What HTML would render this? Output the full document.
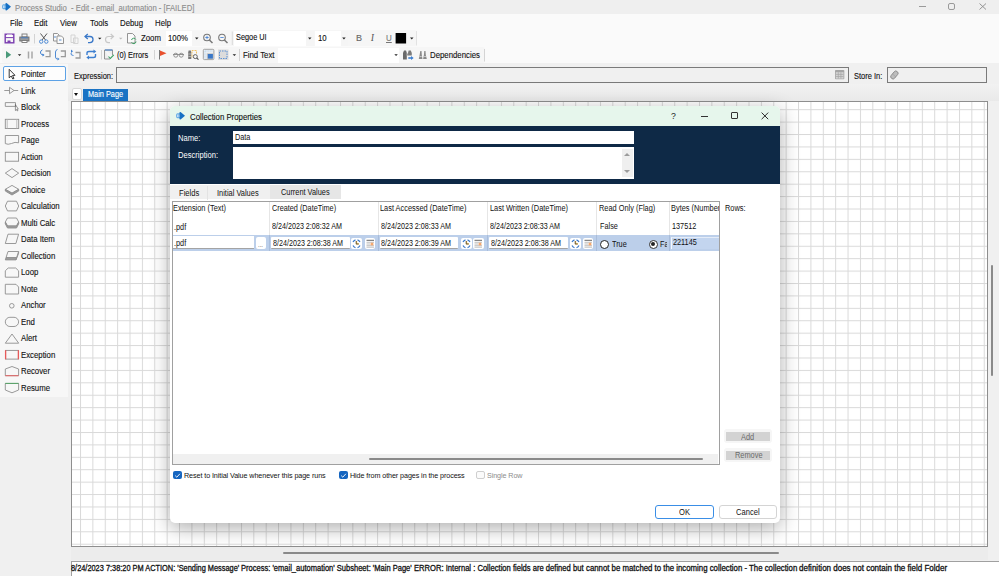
<!DOCTYPE html>
<html><head><meta charset="utf-8">
<style>
*{box-sizing:border-box;margin:0;padding:0}
html,body{width:999px;height:576px;overflow:hidden;background:#f0f0f0;font-family:"Liberation Sans",sans-serif;font-size:7.6px;color:#111}
.a{position:absolute}
.t{position:absolute;white-space:nowrap;line-height:10px;transform-origin:0 50%;-webkit-text-stroke:0.12px currentColor}
#dlgc .t{-webkit-text-stroke:0}
svg{position:absolute;overflow:visible}
.mn{top:17.6px;font-size:7.8px;color:#111}
.tb{font-size:7.8px;color:#111}
.tl{left:21px;font-size:7.8px;color:#111}
.w{color:#fff}
.gh{font-size:7.4px;color:#111}
.gt{font-size:7.6px;color:#111}
.gd{font-size:7.3px;color:#111}
.gc{font-size:7.2px;color:#111;letter-spacing:-0.1px}
.dd{position:absolute;width:0;height:0;border-left:2px solid transparent;border-right:2px solid transparent;border-top:2px solid #111}
</style></head><body>
<!-- title bar -->
<div class="a" style="left:0;top:0;width:999px;height:14px;background:#efefef"></div>
<svg style="left:2.1px;top:2.9px" width="9" height="7.5" viewBox="0 0 9 7.5"><path d="M1.2 1.2 Q0 1.5 0 3.75 Q0 6 1.2 6.3 L4.5 6.3 L4.5 1.2 Z" fill="#6aaee6"/><path d="M3.5 0.2 L4.6 0 L9 3.75 L4.6 7.5 L3.5 7.3 Z" fill="#1670c4"/><path d="M1.5 2.5 V5 M2.9 2.5 V5" stroke="#e4f1fb" stroke-width="0.7"/></svg>
<div class="t" style="left:15px;top:2.7px;color:#8c8c8c;font-size:8.63px;transform:scaleX(0.8929)">Process Studio&nbsp; - Edit - email_automation - [FAILED]</div>
<div class="a" style="left:919px;top:6px;width:7px;height:1px;background:#9a9a9a"></div>
<div class="a" style="left:948px;top:3px;width:7px;height:7px;border:1px solid #9a9a9a;border-radius:2px"></div>
<svg style="left:979px;top:2.5px" width="8" height="7"><path d="M0.5 0.5 L7 6.5 M7 0.5 L0.5 6.5" stroke="#8a8a8a" stroke-width="0.9"/></svg>

<!-- menu / toolbar background -->
<div class="a" style="left:0;top:14px;width:999px;height:48.5px;background:#fafafa"></div>
<div class="t mn" style="left:9.7px;font-size:8.74px;transform:scaleX(0.8929)">File</div>
<div class="t mn" style="left:34.3px;font-size:8.74px;transform:scaleX(0.8929)">Edit</div>
<div class="t mn" style="left:60px;font-size:8.74px;transform:scaleX(0.8929)">View</div>
<div class="t mn" style="left:89.5px;font-size:8.74px;transform:scaleX(0.8929)">Tools</div>
<div class="t mn" style="left:119.5px;font-size:8.74px;transform:scaleX(0.8929)">Debug</div>
<div class="t mn" style="left:155.3px;font-size:8.74px;transform:scaleX(0.8929)">Help</div>

<!-- toolbar 1 -->
<div class="a" style="left:2px;top:30px;width:415px;height:16px;background:#f6f6f6;border-radius:2px"></div>
<div class="a" style="left:166px;top:31px;width:34px;height:14.5px;background:#fff"></div>
<div class="a" style="left:192px;top:31px;width:8px;height:14.5px;background:#f5f5f5"></div>
<div class="a" style="left:234px;top:31px;width:80px;height:14.5px;background:#fff"></div>
<div class="a" style="left:306px;top:31px;width:8px;height:14.5px;background:#f5f5f5"></div>
<div class="a" style="left:315px;top:31px;width:33px;height:14.5px;background:#fff"></div>
<div class="a" style="left:341px;top:31px;width:7px;height:14.5px;background:#f5f5f5"></div>
<div class="t tb" style="left:141px;top:33px;font-size:8.74px;transform:scaleX(0.8929)">Zoom</div>
<div class="t tb" style="left:168px;top:33px;font-size:8.74px;transform:scaleX(0.8929)">100%</div>
<div class="t tb" style="left:236px;top:33px;font-size:8.22px;transform:scaleX(0.8929)">Segoe UI</div>
<div class="t tb" style="left:317.8px;top:33px;font-size:8.74px;transform:scaleX(0.8929)">10</div>
<!-- toolbar 2 -->
<div class="a" style="left:2px;top:47px;width:483px;height:16px;background:#f6f6f6;border-radius:2px"></div>
<div class="a" style="left:278px;top:47.5px;width:121px;height:15px;background:#fff"></div>
<div class="t tb" style="left:117px;top:49.5px;font-size:8.3px;transform:scaleX(0.8929)">(0) Errors</div>
<div class="t tb" style="left:243px;top:50px;font-size:8.74px;transform:scaleX(0.8929)">Find Text</div>
<div class="t tb" style="left:430px;top:50px;font-size:8.74px;transform:scaleX(0.8929)">Dependencies</div>

<svg style="left:0;top:0" width="500" height="66" fill="none" stroke-width="0.9">
<!-- save -->
<rect x="5.2" y="34.2" width="8.6" height="8.6" stroke="#7a3db0" stroke-width="1.4"/>
<rect x="7" y="34.5" width="5" height="3" fill="#fff" stroke="none"/>
<path d="M5.2 37.6 H13.8" stroke="#7a3db0" stroke-width="1"/>
<rect x="7.5" y="40.5" width="3" height="2.3" fill="#7a3db0" stroke="none"/>
<!-- print -->
<rect x="22" y="34" width="5" height="3" stroke="#777"/>
<rect x="19.8" y="37" width="9.2" height="4" fill="#9a9a9a" stroke="#6f6f6f"/>
<path d="M21 37.8 H28" stroke="#3a7ad0" stroke-width="0.8"/>
<rect x="22" y="40.5" width="5" height="2" fill="#fff" stroke="#777"/>
<path d="M34.5 34 V43.5" stroke="#cfcfcf"/>
<!-- cut -->
<path d="M40.5 33.5 L45.5 40 M47 33.5 L42 40" stroke="#444"/>
<circle cx="41.2" cy="41.6" r="1.7" stroke="#3d7fd0"/><circle cx="46.3" cy="41.6" r="1.7" stroke="#3d7fd0"/>
<!-- copy -->
<path d="M53.5 33.5 H57.5 L59 35 V41 H53.5 Z" stroke="#8a8a8a" fill="#fafafa"/>
<path d="M57 36 H61.5 L63.5 38 V43.5 H57 Z" stroke="#8a8a8a" fill="#fafafa"/>
<path d="M55 36 V38 M59 40 L61.5 40" stroke="#4a86d0"/>
<!-- paste disabled -->
<path d="M71 35 H75 V42.5 H71 Z M73.5 38 H78 V43.5 H73.5 Z" stroke="#d0d0d0"/>
<!-- undo -->
<path d="M85.5 36.5 H90 Q93 36.5 93 39.5 Q93 42.6 90 42.6 H88" stroke="#3a78c8" stroke-width="1.3"/>
<path d="M87.8 34 L85 36.5 L87.8 39" stroke="#3a78c8" stroke-width="1.3"/>
<path d="M98 37.8 H101.5 L99.75 39.6 Z" fill="#222" stroke="none"/>
<!-- redo -->
<path d="M113 36.5 H108.5 Q105.5 36.5 105.5 39.5 Q105.5 42.6 108.5 42.6 H110" stroke="#c8c8c8" stroke-width="1.2"/>
<path d="M110.7 34 L113.5 36.5 L110.7 39" stroke="#c8c8c8" stroke-width="1.2"/>
<path d="M119 37.8 H122.5 L120.75 39.6 Z" fill="#bbb" stroke="none"/>
<!-- page refresh -->
<path d="M127.5 33.5 H132.5 L135 36 V43 H127.5 Z" stroke="#888" fill="#fafafa"/>
<path d="M131.5 40 A2.3 2.3 0 0 1 135.8 39.5 M136 41.5 A2.3 2.3 0 0 1 131.6 42.3" stroke="#3aa060" stroke-width="1"/>
<path d="M195 37.6 H198.5 L196.75 39.4 Z" fill="#222" stroke="none"/>
<!-- zoom in/out -->
<circle cx="207" cy="37.5" r="3.3" stroke="#777" stroke-width="1.1"/><path d="M209.4 40 L212.5 43" stroke="#777" stroke-width="1.5"/><path d="M205.3 37.5 H208.7 M207 35.8 V39.2" stroke="#3a7ad0" stroke-width="0.8"/>
<circle cx="222" cy="37.5" r="3.3" stroke="#777" stroke-width="1.1"/><path d="M224.4 40 L227.5 43" stroke="#777" stroke-width="1.5"/><path d="M220.3 37.5 H223.7" stroke="#3a7ad0" stroke-width="0.8"/>
<path d="M232.3 31.5 V45" stroke="#d6d6d6"/>
<path d="M308 37.6 H311.5 L309.75 39.4 Z" fill="#222" stroke="none"/>
<path d="M342.2 37.6 H345.7 L343.95 39.4 Z" fill="#222" stroke="none"/>
<rect x="395.6" y="33" width="10.5" height="10.5" fill="#000" stroke="none"/>
<path d="M410 37.6 H413.5 L411.75 39.4 Z" fill="#222" stroke="none"/>
<path d="M416.5 31 V45.5" stroke="#e0e0e0"/>
<!-- row2 -->
<path d="M6 51 L11.2 54.8 L6 58.6 Z" fill="#4a9a7a" stroke="none"/>
<path d="M17.8 54.3 H21.3 L19.55 56.1 Z" fill="#222" stroke="none"/>
<path d="M28.5 51.5 V58.5 M32 51.5 V58.5" stroke="#a8a8a8" stroke-width="1.5"/>
<!-- step icons -->
<path d="M42.5 49.8 Q40 51 40.5 53 Q41 55 43.5 55" stroke="#3d7fd0" stroke-width="1"/><path d="M42.5 53.6 L44.5 55 L42.5 56.5 Z" fill="#3d7fd0" stroke="none"/>
<path d="M45.5 51 H50 V56.6 H45.5" stroke="#9a9a9a" stroke-width="1.3"/>
<path d="M57.5 49.5 Q55.5 50 55.5 52 V57 Q55.5 59 57.5 59" stroke="#3d7fd0" stroke-width="0.9"/><path d="M57.5 57.6 L59.5 59 L57.5 60.4 Z" fill="#3d7fd0" stroke="none"/>
<path d="M60.8 51 H65.3 V56.6 H60.8" stroke="#9a9a9a" stroke-width="1.3"/>
<path d="M71 53 Q70.5 55.5 73.5 55.5" stroke="#3d7fd0" stroke-width="0.9"/><path d="M71 49.5 L73 51.2 L71 53 Z" fill="#3d7fd0" stroke="none"/>
<path d="M75.5 52.5 H80 V58 H75.5" stroke="#9a9a9a" stroke-width="1.3"/>
<path d="M87 55 V53 Q87 51.5 89 51.5 H94" stroke="#3d7fd0" stroke-width="1.4"/><path d="M93.5 49.5 L96.3 51.5 L93.5 53.5 Z" fill="#3d7fd0" stroke="none"/>
<path d="M95.5 54 V56 Q95.5 57.5 93.5 57.5 H88.5" stroke="#3d7fd0" stroke-width="1.4"/><path d="M89 55.5 L86.3 57.5 L89 59.5 Z" fill="#3d7fd0" stroke="none"/>
<path d="M101.5 50 V59.5" stroke="#d0d0d0"/>
<!-- errors icon -->
<path d="M104.5 50 H112.5 V55 M104.5 50 V59 H110" stroke="#8a8a8a" fill="#eeeeee"/>
<path d="M105 50 H112.5" stroke="#3d7fd0" stroke-width="1"/>
<path d="M108.5 56.5 L110.3 58.5 L113.8 54.8" stroke="#3aa060" stroke-width="1.1"/>
<path d="M154.5 50 V59.5" stroke="#d0d0d0"/>
<!-- flag -->
<path d="M159.5 50 V59.5" stroke="#777" stroke-width="1"/><path d="M160 50.5 L166.5 53.3 L160 56 Z" fill="#e8502e" stroke="none"/>
<!-- glasses -->
<circle cx="175.8" cy="55.2" r="2" stroke="#888"/><circle cx="181.2" cy="55.2" r="2" stroke="#888"/><path d="M173 54.5 H184" stroke="#888"/>
<!-- binoculars -->
<path d="M188.6 50.5 H190.8 L191.3 52.5 V59 H188.2 V52.5 Z" fill="#777" stroke="none"/><path d="M188.4 54 H191 M188.4 56.5 H191" stroke="#ddd" stroke-width="0.6"/>
<path d="M192 50.5 H196.5 V54 M192 50.5 V58" stroke="#f0c060" stroke-width="1" stroke-dasharray="1 0.5"/>
<circle cx="195.3" cy="56.6" r="2" stroke="#555" stroke-width="0.9"/><path d="M196.7 58 L198.5 59.7" stroke="#555" stroke-width="1.1"/>
<!-- selected icon -->
<rect x="203.3" y="49.3" width="10.6" height="10.3" rx="1" fill="#e8eef4" stroke="#9a9a9a" stroke-width="0.9"/>
<path d="M205 51 H212.5 M205 51 V58.5" stroke="#b8d4ee" stroke-width="0.8" stroke-dasharray="1 0.6"/>
<rect x="206.8" y="53.2" width="6.5" height="5.8" fill="#c8c8c8" stroke="none"/>
<rect x="207.8" y="54" width="5.1" height="4.6" fill="#3a78c8" stroke="none"/>
<!-- dotted square -->
<rect x="218" y="49.5" width="10.5" height="10.5" fill="#dcdcdc" stroke="none"/>
<rect x="219.5" y="51" width="7.5" height="7.5" stroke="#3d7fd0" stroke-dasharray="1.5 1" stroke-width="0.8"/>
<path d="M232.6 54.3 H236.1 L234.35 56.1 Z" fill="#222" stroke="none"/>
<path d="M239.5 49 V61" stroke="#d0d0d0"/>
<path d="M394.3 54.3 H397.8 L396.05 56.1 Z" fill="#222" stroke="none"/>
<!-- binoc 2 -->
<path d="M404 50.6 H406 L406.8 53 V59.6 H403 V53 Z" fill="#6a6a6a" stroke="none"/><path d="M408.6 50.6 H410.8 L411.8 53 V55.5 H408 V53 Z" fill="#7a7a7a" stroke="none"/><path d="M406.5 53.5 H408.3 V55.5 H406.5 Z" fill="#999" stroke="none"/>
<path d="M408.3 58 H411.6" stroke="#3d7fd0" stroke-width="1.6"/><path d="M411 55.9 L413.7 58 L411 60.1 Z" fill="#3d7fd0" stroke="none"/>
<!-- deps icon -->
<path d="M420.3 51 H421.5 L421.8 55 L422.5 58.9 H418.8 L419.6 55 Z M424.3 51 H425.5 L425.8 55 L426.8 58.9 H423.1 L423.9 55 Z" fill="#8a8a8a" stroke="none"/><path d="M419.5 56.5 H421.8 M423.8 56.5 H426" stroke="#eee" stroke-width="0.6"/>
<path d="M484.5 49 V61.5" stroke="#d0d0d0"/>
<!-- B I U -->
</svg>
<div class="t" style="left:355.5px;top:33px;font-size:9.52px;color:#666;transform:scaleX(0.95)">B</div>
<div class="t" style="left:370.5px;top:33px;font-size:9.52px;font-family:'Liberation Serif',serif;font-style:italic;color:#555;transform:scaleX(0.8929)">I</div>
<div class="t" style="left:386px;top:33px;font-size:8.96px;text-decoration:underline;color:#777;transform:scaleX(0.8929)">U</div>


<!-- expression row -->
<div class="a" style="left:0;top:64px;width:68px;height:333px;background:#f7f7f7"></div>
<div class="a" style="left:3.1px;top:66.3px;width:62.5px;height:14.8px;border:1.3px solid #5da2e6;border-radius:2px;background:#fdfdfd"></div>
<div class="t tl" style="top:69.4px;font-size:8.74px;transform:scaleX(0.8929)">Pointer</div>
<div class="t tb" style="left:73.5px;top:71.3px;font-size:8.39px;transform:scaleX(0.8929)">Expression:</div>
<div class="a" style="left:116px;top:67px;width:732.5px;height:16px;border:1px solid #7a7a7a;background:#f0f0f0"></div>
<div class="t tb" style="left:853.7px;top:71.3px;font-size:8.39px;transform:scaleX(0.8929)">Store In:</div>
<div class="a" style="left:887px;top:67px;width:100px;height:16px;border:1px solid #7a7a7a;background:#f0f0f0"></div>

<svg style="left:834.8px;top:70.4px" width="10" height="10" fill="none"><rect x="0" y="0" width="9.3" height="9.3" rx="0.8" fill="#a6a6a6"/><rect x="0.8" y="2.2" width="7.7" height="6.4" fill="#d4d4d4"/><path d="M0.8 4.4 H8.5 M0.8 6.5 H8.5 M3.3 2.2 V8.6 M5.9 2.2 V8.6" stroke="#a6a6a6" stroke-width="0.7"/></svg>
<svg style="left:890.4px;top:70px" width="10" height="10" fill="none"><rect x="2.2" y="0.6" width="4.4" height="8.8" rx="2" transform="rotate(40 4.4 5)" fill="#bdbdbd" stroke="#8a8a8a" stroke-width="0.9"/><path d="M2.5 4 L6 7" stroke="#9a9a9a" stroke-width="0.6"/></svg>
<!-- toolbox panel -->
<div class="t tl" style="top:85.9px;font-size:8.74px;transform:scaleX(0.8929)">Link</div>
<div class="t tl" style="top:102.4px;font-size:8.74px;transform:scaleX(0.8929)">Block</div>
<div class="t tl" style="top:118.9px;font-size:8.74px;transform:scaleX(0.8929)">Process</div>
<div class="t tl" style="top:135.4px;font-size:8.74px;transform:scaleX(0.8929)">Page</div>
<div class="t tl" style="top:151.9px;font-size:8.74px;transform:scaleX(0.8929)">Action</div>
<div class="t tl" style="top:168.4px;font-size:8.74px;transform:scaleX(0.8929)">Decision</div>
<div class="t tl" style="top:184.9px;font-size:8.74px;transform:scaleX(0.8929)">Choice</div>
<div class="t tl" style="top:201.4px;font-size:8.74px;transform:scaleX(0.8929)">Calculation</div>
<div class="t tl" style="top:217.9px;font-size:8.74px;transform:scaleX(0.8929)">Multi Calc</div>
<div class="t tl" style="top:234.4px;font-size:8.74px;transform:scaleX(0.8929)">Data Item</div>
<div class="t tl" style="top:250.9px;font-size:8.74px;transform:scaleX(0.8929)">Collection</div>
<div class="t tl" style="top:267.4px;font-size:8.74px;transform:scaleX(0.8929)">Loop</div>
<div class="t tl" style="top:283.9px;font-size:8.74px;transform:scaleX(0.8929)">Note</div>
<div class="t tl" style="top:300.4px;font-size:8.74px;transform:scaleX(0.8929)">Anchor</div>
<div class="t tl" style="top:316.9px;font-size:8.74px;transform:scaleX(0.8929)">End</div>
<div class="t tl" style="top:333.4px;font-size:8.74px;transform:scaleX(0.8929)">Alert</div>
<div class="t tl" style="top:349.9px;font-size:8.74px;transform:scaleX(0.8929)">Exception</div>
<div class="t tl" style="top:366.4px;font-size:8.74px;transform:scaleX(0.8929)">Recover</div>
<div class="t tl" style="top:382.9px;font-size:8.74px;transform:scaleX(0.8929)">Resume</div>

<svg style="left:0;top:0" width="70" height="400" fill="none" stroke="#8e8e8e" stroke-width="0.9">
<!-- pointer -->
<path d="M9.2 69.3 L9.2 77.8 L11.2 76 L12.8 79 L14 78.4 L12.5 75.5 L15 75.3 Z" stroke="#1a1a1a" stroke-width="0.85" fill="#fff"/>
<!-- link -->
<path d="M4.3 90.5 H9.5 M14 90.5 H18.2 M9.5 87.3 V93.7 L14 90.5 Z"/>
<!-- block -->
<path d="M5.3 102.6 H15.5 V106.4 H5.3 Z" />
<path d="M15.4 104.6 L15.4 110.5 L16.4 109.6 L17.3 111 L17.9 110.6 L17 109.3 L18.3 109.1 Z" stroke="#555" stroke-width="0.6"/>
<!-- process -->
<rect x="5.3" y="119.3" width="13.4" height="9.2"/><path d="M7.2 119.3 V128.5 M16.8 119.3 V128.5" stroke="#b5b5b5"/>
<!-- page -->
<path d="M5.3 135.5 H18.6 V142.8 Q15 141.6 11.5 143.5 Q8 145 5.3 143.6 Z"/>
<!-- action -->
<rect x="5.3" y="152.3" width="13.3" height="8.9"/>
<!-- decision -->
<path d="M5.3 173.1 L12 168.6 L18.7 173.1 L12 177.6 Z"/>
<!-- choice -->
<path d="M5.3 189.3 L12 185.4 L18.7 189.3 L12 193.2 Z"/>
<path d="M5.3 189.3 V191 L12 195 L18.7 191 V189.3 L12 193.2 Z" fill="#9a9a9a" stroke="#8e8e8e"/>
<!-- calculation -->
<path d="M7.5 201.2 H16.5 L18.7 206 L16.5 210.9 H7.5 L5.3 206 Z"/>
<!-- multi calc -->
<path d="M7.5 218 H16.5 L18.7 222 L16.5 226 H7.5 L5.3 222 Z"/>
<path d="M5.3 222 V223.8 L7.5 228 H16.5 L18.7 223.8 V222 L16.5 226 H7.5 Z" fill="#a0a0a0"/>
<!-- data item -->
<path d="M8 234.2 H18.6 L15.9 243.5 H5.3 Z"/>
<!-- collection -->
<path d="M8 251.5 H18.6 L16.6 257.7 H6 Z"/>
<path d="M6 257.7 L5.3 259.9 H16 L16.6 257.7 Z M18.6 251.5 V253.3 L16 259.9" fill="#a0a0a0"/>
<!-- loop -->
<path d="M5.3 277.2 V270.8 L8.2 268 H15.7 L18.6 270.8 V277.2 Z"/>
<!-- note -->
<path d="M5.3 284.3 H16 L18.6 287 V294 H5.3 Z"/>
<!-- anchor -->
<circle cx="11.8" cy="305.8" r="2.3"/>
<!-- end -->
<rect x="5.3" y="317.3" width="13.3" height="9.2" rx="4.6"/>
<!-- alert -->
<path d="M5.3 343.2 L12 334 L18.7 343.2 Z"/>
<!-- exception -->
<rect x="5.6" y="350.4" width="12.8" height="8.7"/>
<path d="M5.6 350.2 V359.3 M18.4 350.2 V359.3" stroke="#e85a5a" stroke-width="1.3"/>
<!-- recover -->
<path d="M5.3 375.6 V369 L12 366.5 L18.6 369 V375.6 Z"/>
<path d="M5.3 375.7 H18.6" stroke="#e26a6a" stroke-width="1.1"/>
<!-- resume -->
<path d="M5.3 383.5 V390 L12 392.8 L18.6 390 V383.5 Z"/>
<path d="M5.3 383.4 H18.6" stroke="#5aa46a" stroke-width="1.1"/>
</svg>
<!-- tab strip -->
<div class="a" style="left:68px;top:84px;width:931px;height:17px;background:linear-gradient(#f2f2f2,#e9e9e9)"></div>
<div class="a" style="left:71.5px;top:88px;width:10px;height:11.5px;background:#fff;border:1px solid #d8d8d8;border-radius:2px"></div>
<div class="dd" style="left:73.8px;top:92.6px;border-left-width:2.5px;border-right-width:2.5px;border-top-width:3px"></div>
<div class="a" style="left:83px;top:88.5px;width:44.5px;height:13px;background:#1a73c4"></div>
<div class="t w" style="left:87.5px;top:89.5px;font-size:8.22px;transform:scaleX(0.8929)">Main Page</div>

<!-- canvas -->
<div class="a" id="canvas" style="left:71px;top:101px;width:917px;height:446px;background:#fff;border:1px solid #8e8e8e;overflow:hidden">
<svg width="917" height="446" style="left:-1px;top:-1px">
<defs><pattern id="g" x="9" y="8.2" width="12.38" height="12.415" patternUnits="userSpaceOnUse">
<rect x="0" y="0" width="1" height="12.415" fill="#d9d9d9"/><rect x="0" y="0" width="12.38" height="1" fill="#d9d9d9"/></pattern></defs>
<rect width="917" height="446" fill="url(#g)"/>
</svg>
</div>
<!-- scrollbars -->
<div class="a" style="left:71px;top:547px;width:917px;height:12.5px;background:#ececec"></div>
<div class="a" style="left:283px;top:552px;width:496px;height:2px;background:#8a8a8a;border-radius:1px"></div>
<div class="a" style="left:991px;top:265px;width:2px;height:111px;background:#8a8a8a;border-radius:1px"></div>
<!-- status -->
<div class="a" style="left:70.5px;top:561px;width:929px;height:15px;background:#fff;border-top:1px solid #a0a0a0;border-left:1px solid #a0a0a0"></div>
<div class="t" style="left:70.9px;top:562.5px;font-size:8.51px;color:#111;-webkit-text-stroke:0.3px #111;transform:scaleX(0.8682)">8/24/2023 7:38:20 PM ACTION: 'Sending Message'</div>
<div class="t" style="left:241.1px;top:562.5px;font-size:8.51px;color:#111;-webkit-text-stroke:0.3px #111;transform:scaleX(0.8861)">Process: 'email_automation' Subsheet: 'Main Page'</div>
<div class="t" style="left:413.9px;top:562.5px;font-size:8.51px;color:#111;-webkit-text-stroke:0.3px #111;transform:scaleX(0.8946)">ERROR: Internal : Collection fields are defined but</div>
<div class="t" style="left:585.5px;top:562.5px;font-size:8.51px;color:#111;-webkit-text-stroke:0.3px #111;transform:scaleX(0.9186)">cannot be matched to the incoming collection - The collection</div>
<div class="t" style="left:798.9px;top:562.5px;font-size:8.51px;color:#111;-webkit-text-stroke:0.3px #111;transform:scaleX(0.9412)">definition does not contain the field Folder</div>

<!-- DIALOG -->
<div class="a" id="dlg" style="left:170px;top:106px;width:609.5px;height:416.5px;background:#fff;border-radius:5px;box-shadow:0 5px 20px rgba(0,0,0,0.32);overflow:hidden">
<div class="a" style="left:0;top:0;width:610px;height:20px;background:#e6f6ec"></div>
<div class="a" style="left:0;top:20px;width:610px;height:57.5px;background:#0e2946"></div>
</div>
<svg style="left:175.9px;top:111.7px" width="9" height="7.5" viewBox="0 0 9 7.5"><path d="M1.2 1.2 Q0 1.5 0 3.75 Q0 6 1.2 6.3 L4.5 6.3 L4.5 1.2 Z" fill="#6aaee6"/><path d="M3.5 0.2 L4.6 0 L9 3.75 L4.6 7.5 L3.5 7.3 Z" fill="#1670c4"/><path d="M1.5 2.5 V5 M2.9 2.5 V5" stroke="#e4f1fb" stroke-width="0.7"/></svg>
<div class="t" style="left:189.5px;top:111.5px;font-size:8.74px;color:#111;transform:scaleX(0.8929)">Collection Properties</div>
<div class="t" style="left:671.3px;top:111px;font-size:9.2px;color:#222;-webkit-text-stroke:0;transform:scaleX(0.95)">?</div>
<div class="a" style="left:701px;top:115.5px;width:7px;height:1px;background:#333"></div>
<div class="a" style="left:730.5px;top:112px;width:7px;height:7px;border:1px solid #333;border-radius:1px"></div>
<svg style="left:760.5px;top:111.8px" width="8" height="8"><path d="M0.6 0.6 L7.2 7.2 M7.2 0.6 L0.6 7.2" stroke="#2a2a2a" stroke-width="1"/></svg>
<div id="dlgc">
<div class="t w" style="left:177.7px;top:132.7px;font-size:8.51px;transform:scaleX(0.8929)">Name:</div>
<div class="t w" style="left:177.7px;top:150px;font-size:8.51px;transform:scaleX(0.8929)">Description:</div>
<div class="a" style="left:233px;top:131.2px;width:401.2px;height:13.2px;background:#fff"></div>
<div class="t" style="left:234.5px;top:132.7px;font-size:8.17px;color:#111;transform:scaleX(0.8929)">Data</div>
<div class="a" style="left:233px;top:147px;width:401.2px;height:31.6px;background:#fff"></div>
<div class="a" style="left:622.4px;top:149px;width:10.4px;height:28px;background:#efefef"></div>
<div class="a" style="left:624.3px;top:152.6px;width:0;height:0;border-left:3.2px solid transparent;border-right:3.2px solid transparent;border-bottom:3.6px solid #9c9c9c"></div>
<div class="a" style="left:624.3px;top:170px;width:0;height:0;border-left:3.2px solid transparent;border-right:3.2px solid transparent;border-top:3.6px solid #9c9c9c"></div>

<!-- tabs -->
<div class="a" style="left:170px;top:185.2px;width:171px;height:14.2px;background:#f0f0f0"></div>
<div class="a" style="left:270px;top:185.2px;width:71px;height:14.2px;background:#e6e6e6"></div>
<div class="a" style="left:206.5px;top:185.5px;width:1px;height:14px;background:#e3e3e3"></div>
<div class="t gt" style="left:179px;top:187.8px;font-size:8.51px;transform:scaleX(0.8929)">Fields</div>
<div class="t gt" style="left:216.7px;top:187.8px;font-size:8.34px;transform:scaleX(0.8929)">Initial Values</div>
<div class="t gt" style="left:280.8px;top:188.3px;font-size:8.25px;transform:scaleX(0.8929)">Current Values</div>

<!-- grid -->
<div class="a" style="left:172px;top:200.5px;width:547.5px;height:264px;border:1px solid #a0a0a0;border-right-width:1.5px;border-bottom-width:1.5px;background:#fff"></div>
<div class="a" style="left:269px;top:202px;width:1px;height:47px;background:#e6e6e6"></div>
<div class="a" style="left:378px;top:202px;width:1px;height:47px;background:#e6e6e6"></div>
<div class="a" style="left:487px;top:202px;width:1px;height:47px;background:#e6e6e6"></div>
<div class="a" style="left:596px;top:202px;width:1px;height:47px;background:#e6e6e6"></div>
<div class="a" style="left:669px;top:202px;width:1px;height:47px;background:#e6e6e6"></div>
<div class="t gh" style="left:173px;top:202.8px;font-size:8.51px;transform:scaleX(0.8696)">Extension (Text)</div>
<div class="t gh" style="left:271.6px;top:202.8px;font-size:8.38px;transform:scaleX(0.8696)">Created (DateTime)</div>
<div class="t gh" style="left:380px;top:202.8px;font-size:8.51px;transform:scaleX(0.8696)">Last Accessed (DateTime)</div>
<div class="t gh" style="left:489.7px;top:202.8px;font-size:8.51px;transform:scaleX(0.8696)">Last Written (DateTime)</div>
<div class="t gh" style="left:598.9px;top:202.8px;font-size:8.51px;transform:scaleX(0.8696)">Read Only (Flag)</div>
<div class="a" style="left:670px;top:202px;width:48.5px;height:14px;overflow:hidden"><div class="t gh" style="left:1.4px;top:0.8px;font-size:8.51px;transform:scaleX(0.8696)">Bytes (Number)</div></div>
<div class="t gh" style="left:724.8px;top:203px;font-size:8.51px;transform:scaleX(0.8696)">Rows:</div>
<!-- row1 -->
<div class="t gd" style="left:174px;top:221.5px;font-size:8.76px;transform:scaleX(0.8333)">.pdf</div>
<div class="t gd" style="left:272.1px;top:220.5px;font-size:8.61px;transform:scaleX(0.8333)">8/24/2023 2:08:32 AM</div>
<div class="t gd" style="left:380.5px;top:220.5px;font-size:8.61px;transform:scaleX(0.8333)">8/24/2023 2:08:33 AM</div>
<div class="t gd" style="left:490px;top:220.5px;font-size:8.61px;transform:scaleX(0.8333)">8/24/2023 2:08:33 AM</div>
<div class="t gd" style="left:599.7px;top:220.5px;font-size:8.76px;transform:scaleX(0.8333)">False</div>
<div class="t gd" style="left:672px;top:220.5px;font-size:8.76px;transform:scaleX(0.8333)">137512</div>
<!-- row2 selected -->
<div class="a" style="left:173px;top:234.6px;width:545.5px;height:16px;background:#bccfea"></div>
<div class="a" style="left:173px;top:236.3px;width:81px;height:13.2px;background:#fff;border-bottom:1px solid #a4a4a4"></div>
<div class="a" style="left:255.7px;top:237px;width:10.8px;height:12px;background:#fff;border-radius:2px"></div>
<div class="t" style="left:258.3px;top:240px;font-size:6.72px;color:#666;transform:scaleX(0.8929)">...</div>
<div class="t gd" style="left:174px;top:237.8px;font-size:8.76px;transform:scaleX(0.8333)">.pdf</div>
<div class="a" style="left:271px;top:236.8px;width:78.5px;height:12.6px;background:#fff;border-bottom:1px solid #a4a4a4;border-radius:1px"></div>
<div class="t gd" style="left:272.5px;top:237.8px;font-size:8.61px;transform:scaleX(0.8333)">8/24/2023 2:08:38 AM</div>
<div class="a" style="left:380px;top:236.8px;width:78.3px;height:12.6px;background:#fff;border-bottom:1px solid #a4a4a4;border-radius:1px"></div>
<div class="t gd" style="left:381px;top:237.8px;font-size:8.61px;transform:scaleX(0.8333)">8/24/2023 2:08:39 AM</div>
<div class="a" style="left:489.3px;top:236.8px;width:78.6px;height:12.6px;background:#fff;border-bottom:1px solid #a4a4a4;border-radius:1px"></div>
<div class="t gd" style="left:490.5px;top:237.8px;font-size:8.61px;transform:scaleX(0.8333)">8/24/2023 2:08:38 AM</div>
<div class="a" style="left:378px;top:235px;width:1px;height:15.5px;background:#a9bddb"></div>
<div class="a" style="left:487px;top:235px;width:1px;height:15.5px;background:#a9bddb"></div>
<div class="a" style="left:596px;top:235px;width:1px;height:15.5px;background:#a9bddb"></div>
<div class="a" style="left:669px;top:235px;width:1px;height:15.5px;background:#a9bddb"></div>
<div class="a" style="left:269px;top:235px;width:1px;height:15.5px;background:#a9bddb"></div>
<div class="a" style="left:599.8px;top:239.6px;width:9px;height:9px;border:1.2px solid #222;border-radius:50%;background:#fff"></div>
<div class="t gd" style="left:611.5px;top:238.6px;font-size:8.76px;transform:scaleX(0.8333)">True</div>
<div class="a" style="left:648.8px;top:239.6px;width:9px;height:9px;border:1.2px solid #333;border-radius:50%;background:#fff"></div>
<div class="a" style="left:651.3px;top:242.1px;width:4px;height:4px;border-radius:50%;background:#222"></div>
<div class="a" style="left:659px;top:236px;width:8px;height:14px;overflow:hidden"><div class="t gd" style="left:1px;top:2.6px;font-size:8.76px;transform:scaleX(0.8333)">False</div></div>
<div class="a" style="left:670.6px;top:236.8px;width:48px;height:12.3px;background:#c3d5ef;border-left:1px solid #f4f8fd;border-top:1px solid #e4ecf8"></div>
<div class="t gd" style="left:672.7px;top:237.3px;font-size:8.76px;transform:scaleX(0.8333)">221145</div>
<div class="a" style="left:351.3px;top:237.5px;width:10.7px;height:11.5px;background:#fff;border-radius:2px"></div>
<svg style="left:351.3px;top:237.5px" width="11" height="12" fill="none"><path d="M2 4 A4 4 0 0 1 4.5 1.9 M6.5 1.9 A4 4 0 0 1 9 4 M9 7.5 A4 4 0 0 1 6.5 9.7 M4.5 9.7 A4 4 0 0 1 2 7.5" stroke="#3a78c8" stroke-width="1.2"/><path d="M5.5 3 V5.8 H8" stroke="#e0b040" stroke-width="1.3"/><path d="M5.2 3 V6 H7.5" stroke="#444" stroke-width="0.7"/></svg>
<div class="a" style="left:364.8px;top:237.5px;width:10.5px;height:11.5px;background:#fff;border-radius:2px"></div>
<svg style="left:364.8px;top:237.5px" width="11" height="12" fill="none"><path d="M1.5 2.3 H9" stroke="#666" stroke-width="1"/><path d="M1.5 4.3 H9 M1.5 6 H5 M1.5 7.7 H9 M1.5 9.2 H9" stroke="#b0b0b0" stroke-width="0.8"/><circle cx="7" cy="6" r="1.6" fill="#f4a870"/></svg>
<div class="a" style="left:461.3px;top:237.5px;width:10.7px;height:11.5px;background:#fff;border-radius:2px"></div>
<svg style="left:461.3px;top:237.5px" width="11" height="12" fill="none"><path d="M2 4 A4 4 0 0 1 4.5 1.9 M6.5 1.9 A4 4 0 0 1 9 4 M9 7.5 A4 4 0 0 1 6.5 9.7 M4.5 9.7 A4 4 0 0 1 2 7.5" stroke="#3a78c8" stroke-width="1.2"/><path d="M5.5 3 V5.8 H8" stroke="#e0b040" stroke-width="1.3"/><path d="M5.2 3 V6 H7.5" stroke="#444" stroke-width="0.7"/></svg>
<div class="a" style="left:473.4px;top:237.5px;width:10.5px;height:11.5px;background:#fff;border-radius:2px"></div>
<svg style="left:473.4px;top:237.5px" width="11" height="12" fill="none"><path d="M1.5 2.3 H9" stroke="#666" stroke-width="1"/><path d="M1.5 4.3 H9 M1.5 6 H5 M1.5 7.7 H9 M1.5 9.2 H9" stroke="#b0b0b0" stroke-width="0.8"/><circle cx="7" cy="6" r="1.6" fill="#f4a870"/></svg>
<div class="a" style="left:570.1px;top:237.5px;width:10.7px;height:11.5px;background:#fff;border-radius:2px"></div>
<svg style="left:570.1px;top:237.5px" width="11" height="12" fill="none"><path d="M2 4 A4 4 0 0 1 4.5 1.9 M6.5 1.9 A4 4 0 0 1 9 4 M9 7.5 A4 4 0 0 1 6.5 9.7 M4.5 9.7 A4 4 0 0 1 2 7.5" stroke="#3a78c8" stroke-width="1.2"/><path d="M5.5 3 V5.8 H8" stroke="#e0b040" stroke-width="1.3"/><path d="M5.2 3 V6 H7.5" stroke="#444" stroke-width="0.7"/></svg>
<div class="a" style="left:582.5px;top:237.5px;width:10.5px;height:11.5px;background:#fff;border-radius:2px"></div>
<svg style="left:582.5px;top:237.5px" width="11" height="12" fill="none"><path d="M1.5 2.3 H9" stroke="#666" stroke-width="1"/><path d="M1.5 4.3 H9 M1.5 6 H5 M1.5 7.7 H9 M1.5 9.2 H9" stroke="#b0b0b0" stroke-width="0.8"/><circle cx="7" cy="6" r="1.6" fill="#f4a870"/></svg>
<!-- grid hscroll -->
<div class="a" style="left:173px;top:454px;width:545px;height:9.5px;background:#f0f0f0"></div>
<div class="a" style="left:368.5px;top:458px;width:334.5px;height:2px;background:#8a8a8a;border-radius:1px"></div>

<!-- add/remove -->
<div class="a" style="left:724.4px;top:429.4px;width:47.5px;height:13.8px;background:#f6f6f6;border-radius:3px"></div>
<div class="a" style="left:726px;top:431.5px;width:44px;height:9.5px;background:#d3d3d3"></div>
<div class="t" style="left:740.8px;top:431.5px;font-size:8.29px;color:#6a6a6a;transform:scaleX(0.8929)">Add</div>
<div class="a" style="left:724.4px;top:448.4px;width:47.5px;height:13.8px;background:#f6f6f6;border-radius:3px"></div>
<div class="a" style="left:726px;top:450.5px;width:44px;height:9.5px;background:#d3d3d3"></div>
<div class="t" style="left:734.5px;top:450px;font-size:8.29px;color:#6a6a6a;transform:scaleX(0.8929)">Remove</div>

<!-- checkboxes -->
<div class="a" style="left:172.9px;top:470.8px;width:8.9px;height:8.7px;background:#1565c0;border-radius:2px"></div>
<svg style="left:172.9px;top:470.8px" width="9" height="9"><path d="M2.2 4.6 L3.8 6.2 L6.9 2.8" stroke="#fff" stroke-width="0.9" fill="none"/></svg>
<div class="t gc" style="left:183.8px;top:471px;font-size:8.06px;transform:scaleX(0.8929)">Reset to Initial Value whenever this page runs</div>
<div class="a" style="left:339px;top:470.8px;width:8.9px;height:8.7px;background:#1565c0;border-radius:2px"></div>
<svg style="left:339px;top:470.8px" width="9" height="9"><path d="M2.2 4.6 L3.8 6.2 L6.9 2.8" stroke="#fff" stroke-width="0.9" fill="none"/></svg>
<div class="t gc" style="left:349.5px;top:471px;font-size:8.06px;transform:scaleX(0.8929)">Hide from other pages in the process</div>
<div class="a" style="left:476.4px;top:470.8px;width:8.7px;height:8.7px;border:1px solid #cfcfcf;border-radius:2px;background:#fbfbfb"></div>
<div class="t gc" style="left:487px;top:471px;color:#8c8c8c;font-size:8.06px;transform:scaleX(0.8929)">Single Row</div>

<!-- ok/cancel -->
<div class="a" style="left:655px;top:505px;width:58.6px;height:13.8px;border:1.3px solid #3a8ee6;border-radius:3px;background:#fff"></div>
<div class="t" style="left:679.3px;top:507px;font-size:8.51px;color:#111;transform:scaleX(0.8929)">OK</div>
<div class="a" style="left:718.8px;top:505px;width:57.8px;height:13.8px;border:1px solid #d4d4d4;border-radius:3px;background:#fff"></div>
<div class="t" style="left:736px;top:507px;font-size:8.51px;color:#111;transform:scaleX(0.8929)">Cancel</div>


</div>
</body></html>
